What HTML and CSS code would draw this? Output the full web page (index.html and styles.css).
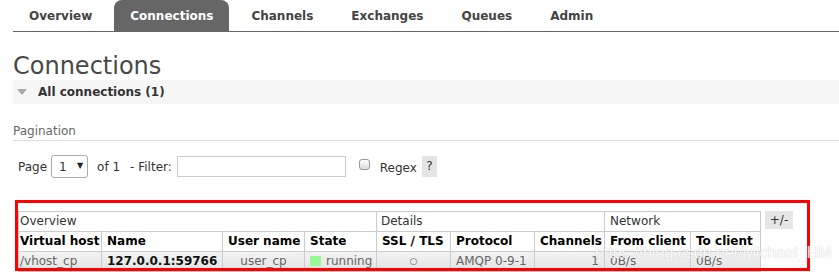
FILE: index.html
```html
<!DOCTYPE html>
<html lang="en">
<head>
    <meta charset="UTF-8">
    <meta name="viewport" content="width=device-width, initial-scale=1.0">
    <title>RabbitMQ Management - Connections</title>
    <link rel="stylesheet" href="styles.css">
</head>
<body>
    <nav class="menu">
        <ul>
            <li><a href="#">Overview</a></li>
            <li class="active"><a href="#">Connections</a></li>
            <li><a href="#">Channels</a></li>
            <li><a href="#">Exchanges</a></li>
            <li><a href="#">Queues</a></li>
            <li><a href="#">Admin</a></li>
        </ul>
    </nav>

    <main class="main">
        <h1>Connections</h1>
        <div class="section-head"><span class="arrow"></span>All connections (1)</div>

        <h3 class="pagination-title">Pagination</h3>
        <form class="pager">
            <label for="page">Page</label>
            <span class="select-wrap">
                <select id="page" name="page">
                    <option value="1">1</option>
                </select>
            </span>
            <span class="of">of 1</span>
            <label for="filter" class="filter-label">- Filter:</label>
            <input type="text" id="filter" name="filter">
            <input type="checkbox" id="regex" name="regex" class="regex-box">
            <label for="regex" class="regex-label">Regex</label>
            <span class="help">?</span>
        </form>

        <div class="list-wrap">
            <div class="list-row">
                <table class="list">
                    <colgroup>
                        <col class="c-vhost">
                        <col class="c-name">
                        <col class="c-user">
                        <col class="c-state">
                        <col class="c-ssl">
                        <col class="c-proto">
                        <col class="c-chan">
                        <col class="c-from">
                        <col class="c-to">
                    </colgroup>
                    <thead>
                        <tr class="group">
                            <th colspan="4" class="first">Overview</th>
                            <th colspan="3">Details</th>
                            <th colspan="2">Network</th>
                        </tr>
                        <tr class="cols">
                            <th class="first">Virtual host</th>
                            <th>Name</th>
                            <th>User name</th>
                            <th>State</th>
                            <th>SSL / TLS</th>
                            <th>Protocol</th>
                            <th>Channels</th>
                            <th>From client</th>
                            <th>To client</th>
                        </tr>
                    </thead>
                    <tbody>
                        <tr>
                            <td class="first">/vhost_cp</td>
                            <td class="name">127.0.0.1:59766</td>
                            <td class="center">user_cp</td>
                            <td><span class="status-green"></span>running</td>
                            <td class="center ssl">○</td>
                            <td>AMQP 0-9-1</td>
                            <td class="right">1</td>
                            <td>0B/s</td>
                            <td>0B/s</td>
                        </tr>
                    </tbody>
                </table>
                <span class="toggle">+/-</span>
            </div>
            <div class="mark-box"></div>
        </div>
    </main>

    <div class="watermark">https://blog.csdn.net/Michael_HM</div>
</body>
</html>
```

FILE: styles.css
```css
body {
    font-family: "DejaVu Sans", Verdana, sans-serif;
    font-size: 12px;
    color: #484848;
    margin: 0;
    padding: 0;
    position: relative;
    overflow: hidden;
}

/* top menu */
.menu ul {
    display: flex;
    list-style: none;
    margin: 0 0 0 13px;
    padding: 0;
    border-bottom: 1px solid #666;
}
.menu li {
    margin-right: 6px;
}
.menu a {
    display: block;
    padding: 9px 16px 8px;
    line-height: 14px;
    font-weight: bold;
    color: #444;
    text-decoration: none;
}
.menu li.active a {
    background-color: #666;
    color: #fff;
    border-radius: 8px 8px 0 0;
}

.main {
    padding-left: 13px;
}

h1 {
    font-size: 24px;
    font-weight: normal;
    line-height: 28px;
    margin: 20px 0 0;
    color: #484848;
}

.section-head {
    display: flex;
    align-items: center;
    height: 24px;
    background-color: #f6f6f6;
    font-weight: bold;
    color: #333;
}
.arrow {
    width: 0;
    height: 0;
    border-left: 5px solid transparent;
    border-right: 5px solid transparent;
    border-top: 6px solid #aaa;
    margin: 0 11px 0 4px;
}

.pagination-title {
    font-size: 12px;
    font-weight: normal;
    line-height: 14px;
    color: #666;
    margin: 20px 0 0;
    padding-bottom: 2px;
    border-bottom: 1px solid #ddd;
}

/* pager row */
.pager {
    display: flex;
    align-items: center;
    height: 23px;
    margin-top: 14px;
    padding-left: 5px;
    line-height: 14px;
    color: #333;
}
.select-wrap {
    position: relative;
    margin-left: 4px;
}
.select-wrap select {
    appearance: none;
    -webkit-appearance: none;
    width: 37px;
    height: 23px;
    border: 1px solid #aaa;
    border-radius: 3px;
    background: #fff;
    font-family: inherit;
    font-size: 12px;
    color: #333;
    padding: 0 0 0 7px;
    margin: 0;
    display: block;
}
.select-wrap::after {
    content: "▼";
    position: absolute;
    right: 5px;
    top: 6px;
    font-size: 8px;
    line-height: 10px;
    color: #222;
    pointer-events: none;
}
.of {
    margin-left: 9px;
}
.filter-label {
    margin-left: 10px;
}
#filter {
    width: 169px;
    height: 21px;
    box-sizing: border-box;
    border: 1px solid #ccc;
    margin: 0 0 0 5px;
    padding: 0 3px;
}
.regex-box {
    appearance: none;
    -webkit-appearance: none;
    width: 11px;
    height: 11px;
    box-sizing: border-box;
    border: 1px solid #999;
    border-radius: 3px;
    background: linear-gradient(#fff, #ddd);
    margin: 0 0 4px 13px;
}
.regex-label {
    margin-left: 10px;
    padding-top: 2px;
}
.help {
    width: 15px;
    height: 21px;
    line-height: 21px;
    text-align: center;
    background-color: #e4e4e4;
    margin-left: 5px;
}

/* connections table */
.list-wrap {
    position: relative;
    margin: 33px 0 0 5px;
}
.list-row {
    display: flex;
    align-items: flex-start;
}
.list {
    border-collapse: collapse;
    table-layout: fixed;
    width: 742px;
    border: 1px solid #ccc;
}
.c-vhost { width: 83px; }
.c-name { width: 121px; }
.c-user { width: 82px; }
.c-state { width: 72px; }
.c-ssl { width: 74px; }
.c-proto { width: 84px; }
.c-chan { width: 70px; }
.c-from { width: 86px; }
.c-to { width: 70px; }

.list th, .list td {
    border: 1px solid #ccc;
    padding: 2px 5px;
    line-height: 15px;
    height: 15px;
    text-align: left;
    white-space: nowrap;
    overflow: hidden;
}
.list .first {
    padding-left: 1px;
}
.list tr.group th {
    font-weight: normal;
    color: #333;
}
.list tr.group th:nth-child(2) {
    padding-left: 4px;
}
.list tr.cols th {
    font-weight: bold;
    color: #000;
}
.list tbody tr {
    background: linear-gradient(#f3f3f3, #e2e2e2);
}
.list td {
    color: #666;
}
.list td.name {
    font-weight: bold;
    color: #111;
}
.list td.center {
    text-align: center;
}
.list td.right {
    text-align: right;
}
.list td.ssl {
    font-size: 9px;
}
.status-green {
    display: inline-block;
    width: 11px;
    height: 10px;
    background-color: #98f898;
    margin-right: 5px;
    vertical-align: -1px;
}

.toggle {
    width: 28px;
    height: 18px;
    line-height: 18px;
    text-align: center;
    background-color: #e6e6e6;
    color: #333;
    margin-left: 4px;
}

/* red annotation frame */
.mark-box {
    position: absolute;
    left: -3px;
    top: -11px;
    width: 795px;
    height: 71px;
    box-sizing: border-box;
    border: 3px solid #f00;
    pointer-events: none;
}

.watermark {
    position: absolute;
    left: 595px;
    top: 244px;
    font-family: "Liberation Sans", Arial, sans-serif;
    font-size: 16px;
    color: #fff;
    text-shadow: 0 0 1px #aaa;
    opacity: 0.8;
    pointer-events: none;
}
```
